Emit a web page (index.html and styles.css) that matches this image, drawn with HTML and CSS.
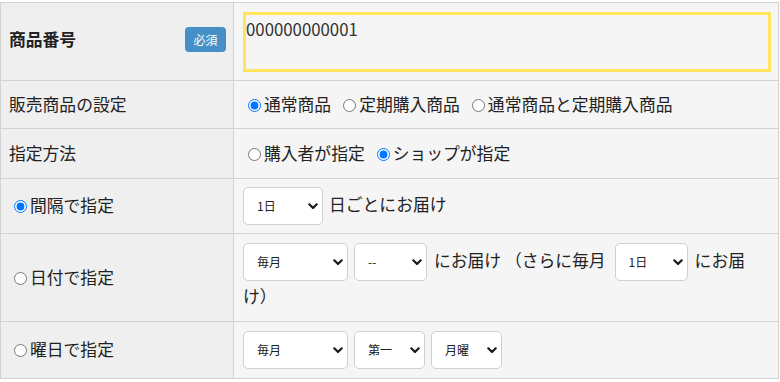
FILE: index.html
```html
<!DOCTYPE html>
<html lang="ja">
<head>
<meta charset="utf-8">
<title>商品設定</title>
<link rel="stylesheet" href="styles.css">
</head>
<body>
<div class="form">
  <div class="th r1"><span class="lbl-strong">商品番号</span><span class="badge">必須</span></div>
  <div class="td r1"><textarea class="code">000000000001</textarea></div>

  <div class="th r2">販売商品の設定</div>
  <div class="td r2"><div class="flow"><label class="opt"><input type="radio" name="kind" checked>通常商品</label><label class="opt"><input type="radio" name="kind">定期購入商品</label><label class="opt"><input type="radio" name="kind">通常商品と定期購入商品</label></div></div>

  <div class="th r3">指定方法</div>
  <div class="td r3"><div class="flow"><label class="opt"><input type="radio" name="who">購入者が指定</label><label class="opt"><input type="radio" name="who" checked>ショップが指定</label></div></div>

  <div class="th r4"><label class="opt-l"><input type="radio" name="mode" checked>間隔で指定</label></div>
  <div class="td r4"><div class="flow"><span class="sel w80"><select><option>1日</option></select><svg class="chev" width="10" height="7" viewBox="0 0 10 7"><path d="M1.3 1.3 L5 5 L8.7 1.3" /></svg></span>日ごとにお届け</div></div>

  <div class="th r5"><label class="opt-l"><input type="radio" name="mode">日付で指定</label></div>
  <div class="td r5"><div class="flow wide"><span class="sel w105"><select><option>毎月</option></select><svg class="chev" width="10" height="7" viewBox="0 0 10 7"><path d="M1.3 1.3 L5 5 L8.7 1.3" /></svg></span><span class="sel w73"><select><option>--</option></select><svg class="chev" width="10" height="7" viewBox="0 0 10 7"><path d="M1.3 1.3 L5 5 L8.7 1.3" /></svg></span><span class="txt">にお届け （さらに毎月</span><span class="sel w73 after-text"><select><option>1日</option></select><svg class="chev" width="10" height="7" viewBox="0 0 10 7"><path d="M1.3 1.3 L5 5 L8.7 1.3" /></svg></span>に<wbr>お<wbr>届<wbr>け）</div></div>

  <div class="th r6"><label class="opt-l"><input type="radio" name="mode">曜日で指定</label></div>
  <div class="td r6"><div class="flow"><span class="sel w105"><select><option>毎月</option></select><svg class="chev" width="10" height="7" viewBox="0 0 10 7"><path d="M1.3 1.3 L5 5 L8.7 1.3" /></svg></span><span class="sel w71"><select><option>第一</option></select><svg class="chev" width="10" height="7" viewBox="0 0 10 7"><path d="M1.3 1.3 L5 5 L8.7 1.3" /></svg></span><span class="sel w71"><select><option>月曜</option></select><svg class="chev" width="10" height="7" viewBox="0 0 10 7"><path d="M1.3 1.3 L5 5 L8.7 1.3" /></svg></span></div></div>
</div>
</body>
</html>
```
FILE: styles.css
```css
html, body {
  margin: 0;
  padding: 0;
  background: #ffffff;
}
body {
  font-family: "Noto Sans CJK JP", "Noto Sans", sans-serif;
  font-size: 16.8px;
  line-height: 1.5;
  color: #222;
}
.form {
  margin-top: 2px;
  width: 779px;
  display: grid;
  grid-template-columns: 233px 545px;
  grid-template-rows: 78px 48px 50px 55px 88px 57px;
  border-top: 1px solid #d2d2d2;
  border-left: 1px solid #d2d2d2;
  box-sizing: border-box;
}
.th, .td {
  box-sizing: border-box;
  border-right: 1px solid #d2d2d2;
  border-bottom: 1px solid #d2d2d2;
  display: flex;
  align-items: center;
}
.th {
  background: #efefef;
  padding: 0 7px 0 8px;
  justify-content: space-between;
}
.th.r1 {
  padding-bottom: 4px;
}
.td {
  background: #f5f5f5;
  padding: 0 7px 0 9px;
}
.lbl-strong {
  font-weight: bold;
}
.badge {
  display: inline-flex;
  align-items: center;
  justify-content: center;
  width: 41px;
  height: 25px;
  border-radius: 4px;
  background: #4690c8;
  color: #fff;
  font-size: 12px;
  line-height: 1;
}
.code {
  display: block;
  width: 100%;
  height: 60px;
  box-sizing: border-box;
  margin: 0;
  border: 3px solid #ffe45c;
  background: transparent;
  padding: 2px 0 0 0;
  font-family: inherit;
  font-size: 16.8px;
  line-height: 1.5;
  color: #333;
  resize: none;
  outline: none;
}
.flow {
  width: 100%;
}
.flow.wide {
  line-height: 31px;
}
.opt {
  margin-right: 7px;
}
input[type="radio"] {
  width: 13px;
  height: 13px;
  margin: 0 3px 0 5px;
  vertical-align: -1px;
}
.sel {
  display: inline-block;
  position: relative;
  margin-right: 6px;
}
.sel.after-text {
  margin-left: 9px;
  margin-right: 7px;
}
.txt {
  margin-left: 1px;
}
.sel select {
  appearance: none;
  -webkit-appearance: none;
  display: block;
  width: 100%;
  height: 38px;
  box-sizing: border-box;
  margin: 0;
  padding: 0 20px 0 13px;
  border: 1px solid #cfcfcf;
  border-radius: 5px;
  background: #fff;
  font-family: "Noto Sans CJK JP", "Noto Sans", sans-serif;
  font-size: 12px;
  line-height: 1.5;
  color: #222;
}
.chev {
  position: absolute;
  right: 5px;
  top: 16px;
  pointer-events: none;
}
.chev path {
  fill: none;
  stroke: #1a1a1a;
  stroke-width: 2.2;
  stroke-linecap: round;
  stroke-linejoin: round;
}
.w80 { width: 80px; }
.w105 { width: 105px; }
.w73 { width: 73px; }
.w71 { width: 71px; }
```
